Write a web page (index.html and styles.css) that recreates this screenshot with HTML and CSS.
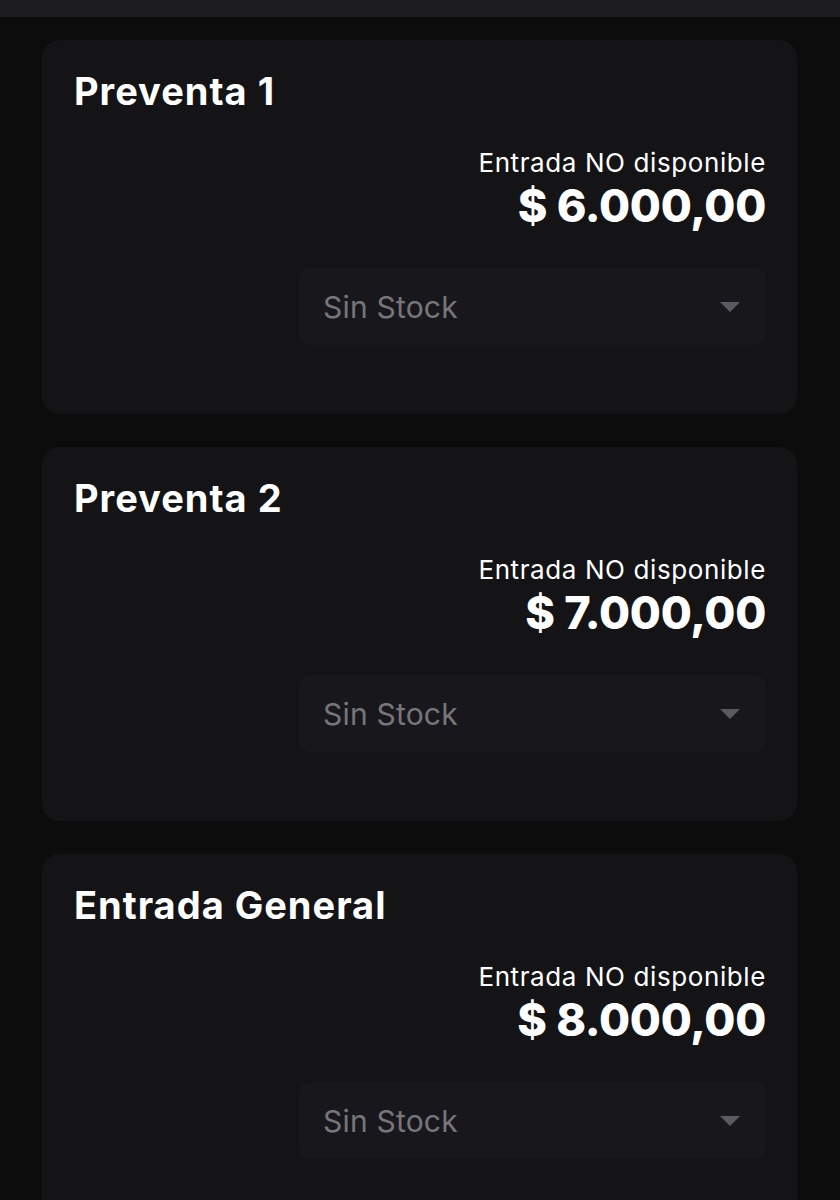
FILE: index.html
```html
<!DOCTYPE html>
<html lang="es">
<head>
<meta charset="utf-8">
<link rel="stylesheet" href="styles.css">
</head>
<body>
<div class="topbar"></div>
<main class="list">
  <section class="card">
    <h2 class="title">Preventa 1</h2>
    <div class="info">
      <div class="status">Entrada NO disponible</div>
      <div class="price">$ 6.000,00</div>
    </div>
    <div class="select">
      <span class="select-text">Sin Stock</span>
      <svg class="caret" width="20" height="10" viewBox="0 0 20 10"><path d="M0 0h20L10 10z" fill="#5a5a60"/></svg>
    </div>
  </section>
  <section class="card">
    <h2 class="title">Preventa 2</h2>
    <div class="info">
      <div class="status">Entrada NO disponible</div>
      <div class="price">$ 7.000,00</div>
    </div>
    <div class="select">
      <span class="select-text">Sin Stock</span>
      <svg class="caret" width="20" height="10" viewBox="0 0 20 10"><path d="M0 0h20L10 10z" fill="#5a5a60"/></svg>
    </div>
  </section>
  <section class="card">
    <h2 class="title">Entrada General</h2>
    <div class="info">
      <div class="status">Entrada NO disponible</div>
      <div class="price">$ 8.000,00</div>
    </div>
    <div class="select">
      <span class="select-text">Sin Stock</span>
      <svg class="caret" width="20" height="10" viewBox="0 0 20 10"><path d="M0 0h20L10 10z" fill="#5a5a60"/></svg>
    </div>
  </section>
</main>
</body>
</html>
```
FILE: styles.css
```css
html, body {
  margin: 0;
  padding: 0;
  background: #0c0c0c;
  font-family: "Inter", "Liberation Sans", sans-serif;
  color: #fff;
}
.topbar {
  height: 17px;
  background: #1c1c21;
}
.list {
  display: flex;
  flex-direction: column;
  gap: 33px;
  padding: 23px 43px 0 42px;
}
.card {
  background: #141416;
  border-radius: 18px;
  padding: 28px 31px 69px 32px;
  display: flex;
  flex-direction: column;
}
.title {
  margin: 0;
  font-size: 38px;
  line-height: 46px;
  font-weight: 700;
  letter-spacing: 1px;
}
.info {
  margin-top: 34px;
  display: flex;
  flex-direction: column;
  align-items: flex-end;
}
.status {
  font-size: 26px;
  line-height: 30px;
  font-weight: 400;
  letter-spacing: 0.6px;
}
.price {
  font-size: 45px;
  line-height: 56px;
  font-weight: 800;
  letter-spacing: -0.3px;
}
.select {
  margin-top: 34px;
  align-self: flex-end;
  width: 467px;
  height: 77px;
  box-sizing: border-box;
  background: #18181c;
  border-radius: 12px;
  display: flex;
  align-items: center;
  justify-content: space-between;
  padding: 0 26px 0 24px;
}
.select-text {
  font-size: 30px;
  letter-spacing: 0.2px;
  color: #76767b;
}
.caret {
  display: block;
}
```
